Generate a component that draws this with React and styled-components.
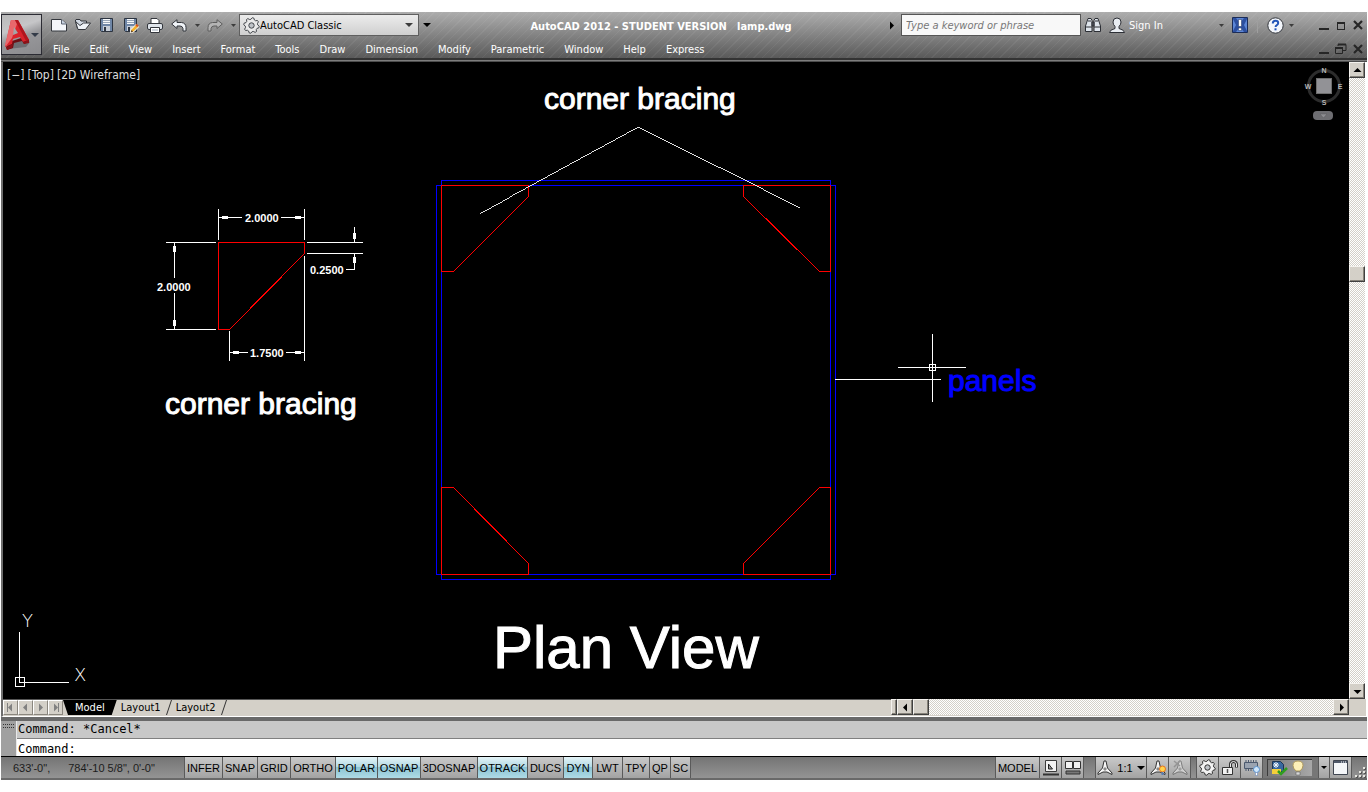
import React from 'react';
import styled, { createGlobalStyle, css } from 'styled-components';

const UI_FONT = "'DejaVu Sans Condensed', 'Noto Sans', sans-serif";

const GlobalStyle = createGlobalStyle`
  * {
    box-sizing: border-box;
  }

  body {
    margin: 0;
    background: #fff;
    font-family: ${UI_FONT};
    font-size: 11px;
  }

  button, input, select {
    font: inherit;
    color: inherit;
    margin: 0;
    padding: 0;
    border: 0;
    border-radius: 0;
    background: none;
  }

  svg {
    display: block;
    flex: none;
  }
`;

const Window = styled.div`
  display: flex;
  flex-direction: column;
  min-height: 100vh;
  padding: 12px 1px;
`;

/* ---------- title bar and menu ---------- */

const Header = styled.header`
  display: flex;
  height: 50px;
  padding-top: 2px;
  border-bottom: 1px solid #4d4d4d;
  box-shadow: inset 0 -1px #7d7d7d, inset 0 -3px #333;
  background:
    repeating-linear-gradient(135deg, rgba(255, 255, 255, 0.05) 0 1px, transparent 1px 6px),
    linear-gradient(#adadad, #858585 45%, #545454);
`;

const AppButton = styled.button`
  display: flex;
  align-items: center;
  flex: none;
  width: 41px;
  height: 41px;
  border: 1px solid #2b2b33;
  background: linear-gradient(160deg, #b9b9b9, #c6c6c8 35%, #97979a 55%, #8b8b8e);
`;

const HeaderRows = styled.div`
  flex: 1;
  min-width: 0;
`;

const TitleRow = styled.div`
  display: flex;
  align-items: center;
  height: 22px;
`;

const QuickAccess = styled.div`
  display: flex;
  align-items: center;
  gap: 8px;
  padding: 0 4px 0 9px;
`;

const IconButton = styled.button`
  display: flex;
  align-items: center;
  justify-content: center;
  width: ${(p) => p.$width || 16}px;
  height: 18px;
`;

const Workspace = styled.label`
  display: flex;
  align-items: center;
  width: 180px;
  height: 22px;
  padding: 0 5px 0 3px;
  border: 1px solid #5f5f5f;
  background: linear-gradient(#ececec, #cfcfcf);
`;

const WorkspaceSelect = styled.select`
  flex: 1;
  min-width: 0;
  appearance: none;
  outline: none;
  color: #000;
`;

const Title = styled.h1`
  flex: 1;
  margin: 0;
  padding-top: 2px;
  color: #fff;
  font-size: 11px;
  font-weight: bold;
  text-align: center;
  white-space: pre;
`;

const InfoCenter = styled.div`
  display: flex;
  align-items: center;
  padding-right: 4px;
`;

const SearchBox = styled.input`
  width: 180px;
  height: 22px;
  margin: 0 4px 0 5px;
  padding: 0 4px;
  border: 1px solid #555;
  background: #f8f8f8;
  font-style: italic;
  outline: none;

  &::placeholder {
    color: #777;
    opacity: 1;
  }
`;

const SignIn = styled.button`
  display: flex;
  align-items: center;
  gap: 4px;
  width: 104px;
  margin-left: 8px;
  color: #fff;
`;

const Separator = styled.span`
  width: 1px;
  height: 16px;
  margin: 0 9px 0 7px;
  background: #9f9f9f;
`;

const WindowButtons = styled.div`
  display: flex;
  align-items: center;
  gap: 6px;
  margin-left: 19px;
`;

const MenuRow = styled.div`
  display: flex;
  align-items: center;
  justify-content: space-between;
  height: 26px;
  padding-right: 4px;
`;

const Menu = styled.nav`
  display: flex;
  padding-left: 1px;
`;

const MenuItem = styled.button`
  padding: 0 10px;
  color: #fff;
  white-space: nowrap;
`;

/* ---------- drawing area ---------- */

const WorkArea = styled.main`
  display: flex;
  flex: 1;
  min-height: 0;
  margin-right: 2px;
  border-left: 2px solid #6e6e6e;
`;

const Viewport = styled.section`
  position: relative;
  flex: 1;
  min-width: 0;
  min-height: 637px;
  overflow: hidden;
  background: #000;
`;

const Drawing = styled.svg`
  width: 100%;
  height: 100%;
  shape-rendering: crispEdges;
`;

const CadText = styled.text`
  font-family: 'Liberation Sans', sans-serif;
  font-size: ${(p) => p.$size}px;
  font-weight: ${(p) => (p.$bold ? 'bold' : 'normal')};
  fill: ${(p) => p.$color || '#fff'};
  stroke: ${(p) => p.$color || '#fff'};
  stroke-width: ${(p) => (p.$bold ? 0 : 1)};
`;

const ViewportControls = styled.div`
  position: absolute;
  top: 6px;
  left: 4px;
  display: flex;
  gap: 3px;
  color: #dcdcdc;
  font-size: 12px;
`;

const ViewCube = styled.svg`
  position: absolute;
  top: 3px;
  right: 4px;
`;

const UcsIcon = styled.svg`
  position: absolute;
  left: 10px;
  bottom: 8px;
  shape-rendering: crispEdges;
`;

const AxisLabel = styled.text`
  font-family: 'DejaVu Sans', sans-serif;
  font-size: 18px;
  font-weight: 200;
  fill: #fff;
`;

const CompassLabel = styled.text`
  font-family: 'Liberation Sans', sans-serif;
  font-size: 7px;
  font-weight: bold;
  fill: #b5b5b5;
  text-anchor: middle;
`;

/* ---------- scroll bars ---------- */

const raised = css`
  background: #d4d0c8;
  border: 1px solid;
  border-color: #f4f2ee #404040 #404040 #f4f2ee;
  box-shadow: inset -1px -1px #868279;
`;

const VerticalScroll = styled.div`
  display: flex;
  flex-direction: column;
  width: 16px;
`;

const HorizontalScroll = styled.div`
  display: flex;
  flex: 458 1 0;
  min-width: 0;
  height: 16px;
`;

const ScrollButton = styled.button`
  ${raised}
  display: flex;
  align-items: center;
  justify-content: center;
  flex: none;
  width: 16px;
  height: 16px;
`;

const ScrollThumb = styled.div`
  ${raised}
  flex: none;
  width: 16px;
  height: 16px;
`;

const SplitHandle = styled.div`
  ${raised}
  flex: none;
  width: 6px;
`;

const ScrollTrack = styled.div`
  flex: ${(p) => p.$grow || 1} 1 0;
  background: conic-gradient(#fff 25%, #d4d0c8 0 50%, #fff 0 75%, #d4d0c8 0) 0 0 / 2px 2px;
`;

/* ---------- layout tabs ---------- */

const TabBar = styled.div`
  display: flex;
  height: 18px;
  margin-right: 1px;
  border-left: 2px solid #6e6e6e;
  border-bottom: 1px solid #fff;
  background: #d4d0c8;
`;

const TabPane = styled.div`
  display: flex;
  flex: 888 1 0;
  min-width: 0;
  border-top: 1px solid #555;
`;

const TabNav = styled.button`
  display: flex;
  align-items: center;
  justify-content: center;
  width: 15px;
  height: 15px;
  border: 1px solid;
  border-color: #fff #8a867e #8a867e #fff;
`;

const LayoutTab = styled.button`
  height: 15px;
  padding: 0 5px 0 4px;
  color: #000;

  ${(p) => p.$active && css`
    padding: 0 12px;
    color: #fff;
    background: #000;
    clip-path: polygon(0 0, 100% 0, calc(100% - 5px) 100%, 5px 100%);
  `}
`;

const Corner = styled.div`
  flex: none;
  width: 17px;
`;

/* ---------- command line ---------- */

const CommandPanel = styled.section`
  display: flex;
  border-top: 4px solid #696969;
  border-bottom: 1px solid #000;
  background: #a0a0a0;
`;

const Grip = styled.div`
  flex: none;
  width: 16px;
  padding: 3px 2px;
  border-right: 1px solid #e8e8e8;
`;

const CommandLines = styled.div`
  flex: 1;
  color: #000;
  font-family: 'DejaVu Sans Mono', monospace;
  font-size: 12px;
`;

const CommandHistory = styled.div`
  height: 18px;
  padding-left: 1px;
  line-height: 17px;
  border-bottom: 1px solid #808080;
  background: #c8c8c8;
`;

const CommandPrompt = styled.label`
  display: flex;
  align-items: center;
  height: 17px;
  padding: 2px 0 0 1px;
  background: #fff;
`;

const CommandInput = styled.input`
  flex: 1;
  outline: none;
`;

/* ---------- status bar ---------- */

const StatusBar = styled.footer`
  display: flex;
  height: 23px;
  color: #000;
  font-family: 'Liberation Sans', sans-serif;
  font-size: 11px;
  border-bottom: 2px solid #696969;
  background: linear-gradient(#747474, #949494);
`;

const Coordinates = styled.div`
  display: flex;
  align-items: center;
  gap: 18px;
  width: 183px;
  padding-left: 12px;
  color: #1c1c1c;
  white-space: nowrap;
`;

const StatusButton = styled.button`
  display: flex;
  align-items: center;
  justify-content: center;
  gap: 4px;
  flex: none;
  width: ${(p) => p.$width || 22}px;
  height: 21px;
  border-left: 1px solid #5a5a5a;
  background: ${(p) => (p.$on
    ? 'linear-gradient(#e4f3f7, #b5dbe5 45%, #8cc3d3 50%, #aedbe6)'
    : 'linear-gradient(#c9c9c9, #a3a3a3)')};
`;

const StatusSpacer = styled.div`
  flex: ${(p) => (p.$width ? 'none' : 1)};
  width: ${(p) => p.$width}px;
  border-left: 1px solid #5a5a5a;
`;

const Tray = styled.div`
  display: flex;
  align-items: center;
  width: 56px;
  padding: 0 6px 0 4px;
  border-left: 1px solid #5a5a5a;
  background: #777;
`;

const TrayWell = styled.div`
  display: flex;
  align-items: center;
  flex: 1;
  gap: 4px;
  height: 17px;
  padding-left: 3px;
  border-top: 1px solid #3c3c3c;
  border-left: 1px solid #3c3c3c;
  background: linear-gradient(90deg, #7b7b7b, #a8a8a8);
`;

const ResizeGrip = styled.div`
  display: flex;
  align-items: flex-end;
  justify-content: flex-end;
  width: 16px;
  border-left: 1px solid #5a5a5a;
`;

/* ---------- icons ---------- */

const Caret = ({ size = 5, color = '#3c3c3c' }) => (
  <svg width={size} height={Math.ceil(size / 2)} viewBox="0 0 10 5" preserveAspectRatio="none">
    <path d="M0 0h10L5 5z" fill={color} />
  </svg>
);

const Arrow = ({ dir, color = '#000', bar }) => {
  const angle = { right: 0, down: 90, left: 180, up: 270 }[dir];
  return (
    <svg width="9" height="9" viewBox="0 0 9 9">
      <g transform={`rotate(${angle} 4.5 4.5)`} fill={color}>
        <path d="M3 0.5l4 4-4 4z" />
        {bar && <path d="M7 0h1v9H7z" />}
      </g>
    </svg>
  );
};

const LogoIcon = () => (
  <svg width="29" height="38" viewBox="0 0 29 38">
    <path d="M6 33l18-2 4-5-6-4-14 6z" fill="#55555a" opacity="0.6" />
    <path d="M4 31l1 3 6-2 1-5 8-2 2 3 5-2v-3l-8-1-9 3z" fill="#6d0f14" />
    <path d="M9 4h7l11 20-6 2-3-5-7 2-1 5-7 3z" fill="#d9232c" />
    <path d="M9 4h4l2 4-5 14-6 8-1-1z" fill="#e9686c" />
    <path d="M12 11l4 6-5 2z" fill="#a5a5a8" />
    <path d="M16 4l11 20-3 1L13 4z" fill="#b0161e" />
    <path d="M4 31l7-3-1 4-5 2zM21 26l6-2v3l-5 1z" fill="#8b1218" />
  </svg>
);

const NewIcon = () => (
  <svg width="16" height="14" viewBox="0 0 16 14">
    <path d="M0.500 1.500h10l5 4.500v7h-15z" fill="#f4f6fa" stroke="#33363c" />
    <path d="M10.500 1.500v4.500h5" fill="#c9d3e2" stroke="#5b6370" />
  </svg>
);

const OpenIcon = () => (
  <svg width="16" height="12" viewBox="0 0 16 12">
    <path d="M2.500 9.500L0.500 2V1l0.500-0.500h4l1 1.500h5.500V4" fill="#d3dae4" stroke="#33363c" />
    <path d="M0.500 2.500l2.500 8h7.500l5-6.500h-7L5 6.500z" fill="#eef2f7" stroke="#33363c" />
  </svg>
);

const SaveIcon = ({ pencil }) => (
  <svg width="16" height="16" viewBox="0 0 16 16">
    <path d="M1.500 1.500h12v13h-11l-1-1z" fill="#6f86a6" stroke="#2d3440" />
    <path d="M4 2h7v5H4z" fill="#f6f8fa" />
    <path d="M4 3.500h7M4 5.500h7" stroke="#9aa7b8" />
    <path d="M4 9h7v5H4z" fill="#c7ced8" />
    <path d="M5 10h2v4H5z" fill="#2d3440" />
    {pencil && (
      <g>
        <path d="M7.500 15.500l0.500-3 5-5 2.500 2.500-5 5z" fill="#f5b22d" stroke="#fff" />
        <path d="M8 15.500l0.500-2.500 1.500 1.500z" fill="#3b2412" />
        <path d="M13 7.500l2 2" stroke="#d8561c" strokeWidth="2" />
      </g>
    )}
  </svg>
);

const PrintIcon = () => (
  <svg width="16" height="15" viewBox="0 0 16 15">
    <path d="M4 6V0.500h6l2 2V6" fill="#fff" stroke="#33363c" />
    <rect x="0.500" y="5.500" width="15" height="6" rx="1.500" fill="#dfe4ea" stroke="#33363c" />
    <path d="M3.500 9.500h9v5h-9z" fill="#fff" stroke="#33363c" />
    <path d="M5 12h6" stroke="#9aa7b8" />
  </svg>
);

const UndoIcon = ({ flip }) => (
  <svg width="16" height="13" viewBox="0 0 16 13">
    <path
      transform={flip && 'translate(16 0) scale(-1 1)'}
      d="M0.700 5L6 0.700v2.800h4.500q4.500 0.500 4.500 5v3.500h-3V9.500q-0.500-2.500-3-2.500H6v2.500z"
      fill={flip ? '#b4b4b4' : '#f0f3f7'}
      stroke={flip ? '#5e5e5e' : '#33363c'}
    />
  </svg>
);

const gearPath = (c, inner, outer) => {
  const points = [];
  for (let i = 0; i < 32; i += 1) {
    const r = i % 4 < 2 ? outer : inner;
    const a = ((i + 0.5) * Math.PI) / 16;
    points.push(`${(c + r * Math.cos(a)).toFixed(2)} ${(c + r * Math.sin(a)).toFixed(2)}`);
  }
  return `M${points.join('L')}z`;
};

const GearIcon = ({ fill = '#e9e9e9', stroke = '#44474c' }) => (
  <svg width="17" height="17" viewBox="0 0 17 17">
    <path d={gearPath(8.5, 6.2, 7.8)} fill={fill} stroke={stroke} />
    <circle cx="8.5" cy="8.5" r="2.7" fill="#bfc3c8" stroke={stroke} />
  </svg>
);

const BinocularsIcon = () => (
  <svg width="16" height="16" viewBox="0 0 16 16">
    <path d="M3 1.500h3l1 2v11H0.500V9z" fill="#dfe5ec" stroke="#2c2f35" />
    <path d="M13 1.500h-3l-1 2v11h6.500V9z" fill="#dfe5ec" stroke="#2c2f35" />
    <path d="M7 5h2v4H7zM1 10h6M9 10h6M3 4h3M10 4h3" fill="#565b64" stroke="#2c2f35" />
  </svg>
);

const UserIcon = () => (
  <svg width="16" height="16" viewBox="0 0 16 16">
    <path d="M0.500 15.500q0-2.500 5.500-4v-2q-2-2-2-4.500 0-4 4-4t4 4q0 2.500-2 4.500v2q5.500 1.500 5.500 4z" fill="#e9edf2" stroke="#2c2f35" />
  </svg>
);

const ExchangeIcon = () => (
  <svg width="16" height="16" viewBox="0 0 16 16">
    <path d="M0.500 0.500h15v15H0.500z" fill="#5c86d6" stroke="#1b2c58" />
    <path d="M1 1h3l4 5 4-5h3v1l-3 6 3 6v1h-3l-4-5-4 5H1v-1l3-6-3-6z" fill="#2c4f9f" />
    <path d="M6.500 2.500h3v7h-3zM6.500 11h3v2.500h-3z" fill="#fff" stroke="#1b2c58" strokeWidth="0.500" />
  </svg>
);

const HelpIcon = () => (
  <svg width="17" height="17" viewBox="0 0 17 17">
    <circle cx="8.5" cy="8.5" r="7.700" fill="#f3f6fb" stroke="#33363c" />
    <path d="M5.800 6.500q0-2.700 2.700-2.700t2.700 2.300q0 1.400-1.600 2.200-1 0.600-1 1.700" fill="none" stroke="#2356b8" strokeWidth="2" />
    <path d="M7.500 11.300h2v2h-2z" fill="#2356b8" />
  </svg>
);

const MinimizeIcon = () => (
  <svg width="11" height="11" viewBox="0 0 11 11"><path d="M1 8h10v2H1z" fill="#262626" /></svg>
);

const MaximizeIcon = () => (
  <svg width="11" height="11" viewBox="0 0 11 11">
    <path d="M2 2h8v8H2zM3 4v5h6V4z" fillRule="evenodd" fill="#262626" />
  </svg>
);

const RestoreIcon = () => (
  <svg width="13" height="12" viewBox="0 0 13 12">
    <path d="M4 3V1.500h8V7.500H9M1.500 4.500h7v6h-7z" fill="none" stroke="#262626" />
    <path d="M4 1.500h8M1 5h8" stroke="#262626" strokeWidth="2" />
  </svg>
);

const CloseIcon = () => (
  <svg width="10" height="10" viewBox="0 0 10 10">
    <path d="M1 1l8 8M9 1L1 9" stroke="#262626" strokeWidth="2.200" />
  </svg>
);

const ModelSpaceIcon = () => (
  <svg width="16" height="16" viewBox="0 0 16 16">
    <path d="M2.500 0.500h11v11h-11z" fill="#f2f2f2" stroke="#3b3b3b" />
    <path d="M5.500 4v5h4z" fill="#999" stroke="#222" />
    <path d="M0 14.500h16" stroke="#333" strokeWidth="2" />
  </svg>
);

const QuickViewIcon = () => (
  <svg width="16" height="16" viewBox="0 0 16 16">
    <path d="M0.500 1.500h7v7h-7zM8.500 1.500h7v7h-7z" fill="#f2f2f2" stroke="#333" />
    <path d="M1 11h14v3H1z" fill="#777" stroke="#333" />
  </svg>
);

const AnnotationIcon = ({ badge, faded }) => (
  <svg width="16" height="16" viewBox="0 0 16 16">
    <g opacity={faded ? 0.45 : 1}>
      <path d="M7 1l2 0 1.500 7 4.500 5v1.500l-5-2.500H6l-5 2.500V13l4.500-5z" fill="#f6f6f6" stroke="#333" />
      <path d="M6 9l2-2 2 2-2 2z" fill="#888" />
      {faded && <path d="M2 1l6 5M8 1L2 7" stroke="#666" strokeWidth="1.500" />}
    </g>
    {badge && (
      <g>
        <circle cx="12.500" cy="9" r="3" fill="#ffd34d" stroke="#e8731a" />
        <path d="M11.500 12h2v3h-2z" fill="#5a7fb8" />
      </g>
    )}
  </svg>
);

const LockIcon = () => (
  <svg width="16" height="16" viewBox="0 0 16 16">
    <path d="M8.500 8V4q0.500-2.500 3-2.500t3 2.500v3.500" fill="none" stroke="#333" strokeWidth="3" />
    <path d="M8.500 8V4q0.500-2.500 3-2.500t3 2.500v3" fill="none" stroke="#eee" />
    <path d="M0.500 7.500h10v7h-10z" fill="#f2f2f2" stroke="#333" />
    <path d="M5.500 9v4" stroke="#555" strokeWidth="1.500" />
  </svg>
);

const HardwareIcon = () => (
  <svg width="16" height="16" viewBox="0 0 16 16">
    <path d="M2 0v11M4.500 0v11M7 0v11M9.500 0v11M12 0v9" stroke="#4d5a6e" />
    <path d="M0.500 2.500h13v6h-13z" fill="#9aa3b0" stroke="#4d5a6e" />
    <circle cx="12.500" cy="9.500" r="3" fill="#cfe6fb" stroke="#5a93cf" />
    <path d="M11.500 12.500h2v3h-2z" fill="#fff" stroke="#5a7fb8" strokeWidth="0.500" />
  </svg>
);

const TrustedIcon = () => (
  <svg width="17" height="16" viewBox="0 0 17 16">
    <path d="M1.500 1.500h8l3 3v7h-11z" fill="#39689f" stroke="#1d3554" />
    <path d="M1 9h9v5H1z" fill="#f4cf3a" />
    <path d="M2 5h6M5 2v6M3 3l4 4M7 3L3 7" stroke="#eef4fa" />
    <path d="M7 11l3 3 6-6" fill="none" stroke="#2f9e1f" strokeWidth="2.500" />
  </svg>
);

const BulbIcon = () => (
  <svg width="12" height="16" viewBox="0 0 12 16">
    <path d="M4 11q-3-2.500-3-5.500 0-4.500 5-4.500t5 4.500q0 3-3 5.500z" fill="#fdf0b8" stroke="#b09a5c" />
    <path d="M4 12h4v3H4z" fill="#d8d8d8" stroke="#555" strokeWidth="0.500" />
  </svg>
);

const CleanScreenIcon = () => (
  <svg width="15" height="15" viewBox="0 0 15 15">
    <path d="M0.500 0.500h14v14h-14z" fill="#f4f6f9" stroke="#3f4550" />
    <path d="M1 1h13v2H1z" fill="#4f596a" />
    <path d="M8 2h1M10 2h1M12 2h1" stroke="#fff" />
  </svg>
);

const GripDots = () => (
  <svg width="12" height="4" viewBox="0 0 12 4" shapeRendering="crispEdges">
    <path d="M0 0.500h12M0 3.500h12" stroke="#333" strokeDasharray="1 1" />
  </svg>
);

const ResizeDots = () => (
  <svg width="13" height="12" viewBox="0 0 13 12">
    {[[9, 1], [5, 5], [9, 5], [1, 9], [5, 9], [9, 9]].map(([x, y]) => (
      <g key={`${x}-${y}`}>
        <rect x={x + 1} y={y + 1} width="2" height="2" fill="#555" />
        <rect x={x} y={y} width="2" height="2" fill="#e6e6e0" />
      </g>
    ))}
  </svg>
);

const Slash = () => (
  <svg width="6" height="15" viewBox="0 0 6 15">
    <path d="M5.500 0L0.500 15" stroke="#333" />
  </svg>
);

/* ---------- drawing content ---------- */

// arrowhead with its tip on the extension line
const DimArrow = ({ x, y, dir }) => {
  const angle = { left: 0, up: 90, right: 180, down: 270 }[dir];
  return <path transform={`translate(${x} ${y}) rotate(${angle})`} d="M0 0L4-1.500H9V1.500H4z" fill="#fff" />;
};

const PlanDrawing = () => (
  <Drawing aria-label="Plan view">
    <g transform="translate(-3 -62)" fill="none">
      <g stroke="#0000ff">
        <path d="M441.500 180.500h389v399h-389z" />
        <path d="M436.500 185.500h399v389h-399z" />
      </g>
      <g stroke="#ff0000">
        <path d="M441.500 185.500h87v11l-75 75h-12z" />
        <path d="M743.500 185.500h87v86h-11l-76-75z" />
        <path d="M441.500 487.500h12l75 76v11h-87z" />
        <path d="M819.500 487.500h11v87h-87v-11z" />
        <path d="M218.500 242.500h86v11l-75 76h-11z" />
      </g>
      <g stroke="#fff">
        <path d="M479.500 213.500l158-86 162 80" strokeWidth="0.880" />
        <path d="M835 379.500h106" />
        <path d="M898 367.500h68M932.500 334v68M929.500 364.500h6v6h-6z" />
        <path d="M218.500 209v31M304.500 209v31M218 217.500h24M281 217.500h24" />
        <path d="M166 242.500h50M166 329.500h50M174.500 242v36M174.500 293v36" />
        <path d="M229.500 331v30M304.500 256v105M229 352.500h19M286 352.500h19" />
        <path d="M307 242.500h56M307 253.500h56M354.500 227v15M354.500 254v15.500M355 269.500h-9" />
      </g>
      <DimArrow x={219} y={217.5} dir="left" />
      <DimArrow x={304} y={217.5} dir="right" />
      <DimArrow x={174.5} y={243} dir="up" />
      <DimArrow x={174.5} y={329} dir="down" />
      <DimArrow x={230} y={352.5} dir="left" />
      <DimArrow x={304} y={352.5} dir="right" />
      <DimArrow x={354.5} y={242} dir="down" />
      <DimArrow x={354.5} y={254} dir="up" />
      <CadText x="245" y="222" $size={11} $bold>2.0000</CadText>
      <CadText x="157" y="291" $size={11} $bold>2.0000</CadText>
      <CadText x="310" y="274" $size={11} $bold>0.2500</CadText>
      <CadText x="250" y="357" $size={11} $bold>1.7500</CadText>
      <CadText x="544" y="109" $size={30}>corner bracing</CadText>
      <CadText x="165" y="414" $size={30}>corner bracing</CadText>
      <CadText x="948" y="391" $size={30} $color="#0000ff">panels</CadText>
      <CadText x="493" y="668" $size={60}>Plan View</CadText>
    </g>
  </Drawing>
);

const MENUS = ['File', 'Edit', 'View', 'Insert', 'Format', 'Tools', 'Draw', 'Dimension',
  'Modify', 'Parametric', 'Window', 'Help', 'Express'];

const TOGGLES = [
  { label: 'INFER', width: 38 },
  { label: 'SNAP', width: 35 },
  { label: 'GRID', width: 33 },
  { label: 'ORTHO', width: 45 },
  { label: 'POLAR', width: 42, on: true },
  { label: 'OSNAP', width: 43, on: true },
  { label: '3DOSNAP', width: 57 },
  { label: 'OTRACK', width: 50, on: true },
  { label: 'DUCS', width: 36 },
  { label: 'DYN', width: 29, on: true },
  { label: 'LWT', width: 30 },
  { label: 'TPY', width: 27 },
  { label: 'QP', width: 21 },
  { label: 'SC', width: 20 },
];

const App = () => (
  <Window>
    <GlobalStyle />
    <Header>
      <AppButton aria-label="Application menu">
        <LogoIcon />
        <Caret size={8} color="#333b48" />
      </AppButton>
      <HeaderRows>
        <TitleRow>
          <QuickAccess>
            <IconButton aria-label="New"><NewIcon /></IconButton>
            <IconButton aria-label="Open"><OpenIcon /></IconButton>
            <IconButton aria-label="Save"><SaveIcon /></IconButton>
            <IconButton aria-label="Save as"><SaveIcon pencil /></IconButton>
            <IconButton aria-label="Plot"><PrintIcon /></IconButton>
            <IconButton aria-label="Undo"><UndoIcon /></IconButton>
            <IconButton aria-label="Undo list" $width={4}><Caret /></IconButton>
            <IconButton aria-label="Redo"><UndoIcon flip /></IconButton>
            <IconButton aria-label="Redo list" $width={4}><Caret /></IconButton>
          </QuickAccess>
          <Workspace>
            <GearIcon />
            <WorkspaceSelect aria-label="Workspace">
              <option>AutoCAD Classic</option>
            </WorkspaceSelect>
            <Caret size={8} />
          </Workspace>
          <IconButton aria-label="Customize"><Caret size={8} color="#000" /></IconButton>
          <Title>{'AutoCAD 2012 - STUDENT VERSION   lamp.dwg'}</Title>
          <InfoCenter>
            <Arrow dir="right" />
            <SearchBox aria-label="Search" placeholder="Type a keyword or phrase" />
            <IconButton aria-label="Search"><BinocularsIcon /></IconButton>
            <SignIn><UserIcon />Sign In</SignIn>
            <IconButton aria-label="Account" $width={17}><Caret /></IconButton>
            <IconButton aria-label="Exchange" $width={20}><ExchangeIcon /></IconButton>
            <Separator />
            <IconButton aria-label="Help"><HelpIcon /></IconButton>
            <IconButton aria-label="Help menu"><Caret /></IconButton>
            <WindowButtons>
              <IconButton aria-label="Minimize" $width={11}><MinimizeIcon /></IconButton>
              <IconButton aria-label="Maximize" $width={11}><MaximizeIcon /></IconButton>
              <IconButton aria-label="Close" $width={11}><CloseIcon /></IconButton>
            </WindowButtons>
          </InfoCenter>
        </TitleRow>
        <MenuRow>
          <Menu>
            {MENUS.map((name) => <MenuItem key={name}>{name}</MenuItem>)}
          </Menu>
          <WindowButtons>
            <IconButton aria-label="Minimize drawing" $width={11}><MinimizeIcon /></IconButton>
            <IconButton aria-label="Restore drawing" $width={11}><RestoreIcon /></IconButton>
            <IconButton aria-label="Close drawing" $width={11}><CloseIcon /></IconButton>
          </WindowButtons>
        </MenuRow>
      </HeaderRows>
    </Header>

    <WorkArea>
      <Viewport>
        <PlanDrawing />
        <ViewportControls>
          <button>[−]</button>
          <button>[Top]</button>
          <button>[2D Wireframe]</button>
        </ViewportControls>
        <ViewCube width="42" height="58" viewBox="0 0 42 58">
          <circle cx="21" cy="21" r="15.500" fill="none" stroke="#2c2c2c" strokeWidth="3" />
          <rect x="13.500" y="13.500" width="15" height="15" fill="#929296" stroke="#6e6e6e" />
          <CompassLabel x="21" y="8">N</CompassLabel>
          <CompassLabel x="21" y="40">S</CompassLabel>
          <CompassLabel x="5" y="24">W</CompassLabel>
          <CompassLabel x="37" y="24">E</CompassLabel>
          <rect x="10" y="46" width="20" height="9" rx="4" fill="#6e6e72" />
          <path d="M17 49h7l-3.500 4z" fill="#8e8e92" stroke="#5a5a5e" strokeWidth="0.500" />
        </ViewCube>
        <UcsIcon width="80" height="80" viewBox="0 0 80 80">
          <path d="M6.500 21v50M6 71.500h50M2.500 66.500h9v9h-9z" fill="none" stroke="#fff" />
          <AxisLabel x="9" y="16">Y</AxisLabel>
          <AxisLabel x="61" y="70">X</AxisLabel>
        </UcsIcon>
      </Viewport>
      <VerticalScroll>
        <ScrollButton aria-label="Scroll up"><Arrow dir="up" /></ScrollButton>
        <ScrollTrack $grow={188} />
        <ScrollThumb />
        <ScrollTrack $grow={401} />
        <ScrollButton aria-label="Scroll down"><Arrow dir="down" /></ScrollButton>
      </VerticalScroll>
    </WorkArea>

    <TabBar>
      <TabPane>
        <TabNav aria-label="First"><Arrow dir="left" bar color="#808080" /></TabNav>
        <TabNav aria-label="Previous"><Arrow dir="left" color="#808080" /></TabNav>
        <TabNav aria-label="Next"><Arrow dir="right" color="#808080" /></TabNav>
        <TabNav aria-label="Last"><Arrow dir="right" bar color="#808080" /></TabNav>
        <LayoutTab $active>Model</LayoutTab>
        <LayoutTab>Layout1</LayoutTab>
        <Slash />
        <LayoutTab>Layout2</LayoutTab>
        <Slash />
      </TabPane>
      <HorizontalScroll>
        <SplitHandle />
        <ScrollButton aria-label="Scroll left"><Arrow dir="left" /></ScrollButton>
        <ScrollThumb />
        <ScrollTrack />
        <ScrollButton aria-label="Scroll right"><Arrow dir="right" /></ScrollButton>
      </HorizontalScroll>
      <Corner />
    </TabBar>

    <CommandPanel>
      <Grip><GripDots /></Grip>
      <CommandLines>
        <CommandHistory>Command: *Cancel*</CommandHistory>
        <CommandPrompt>
          Command:
          <CommandInput />
        </CommandPrompt>
      </CommandLines>
    </CommandPanel>

    <StatusBar>
      <Coordinates>
        <span>633'-0",</span>
        <span>784'-10 5/8", 0'-0"</span>
      </Coordinates>
      {TOGGLES.map(({ label, width, on }) => (
        <StatusButton key={label} $width={width} $on={on} aria-pressed={!!on}>{label}</StatusButton>
      ))}
      <StatusSpacer />
      <StatusButton $width={44}>MODEL</StatusButton>
      <StatusButton aria-label="Quick view layouts"><ModelSpaceIcon /></StatusButton>
      <StatusButton aria-label="Quick view drawings"><QuickViewIcon /></StatusButton>
      <StatusSpacer $width={12} />
      <StatusButton $width={51}>
        <AnnotationIcon />
        1:1
        <Caret size={8} color="#000" />
      </StatusButton>
      <StatusButton aria-label="Annotation visibility"><AnnotationIcon badge /></StatusButton>
      <StatusButton aria-label="Auto scale"><AnnotationIcon faded /></StatusButton>
      <StatusSpacer $width={6} />
      <StatusButton aria-label="Workspace switching"><GearIcon fill="#f2f2f2" stroke="#333" /></StatusButton>
      <StatusButton aria-label="Lock UI"><LockIcon /></StatusButton>
      <StatusButton aria-label="Hardware acceleration"><HardwareIcon /></StatusButton>
      <Tray>
        <TrayWell>
          <TrustedIcon />
          <BulbIcon />
        </TrayWell>
      </Tray>
      <StatusButton $width={11} aria-label="Tray menu"><Caret size={6} color="#000" /></StatusButton>
      <StatusButton aria-label="Clean screen"><CleanScreenIcon /></StatusButton>
      <ResizeGrip><ResizeDots /></ResizeGrip>
    </StatusBar>
  </Window>
);

export default App;
